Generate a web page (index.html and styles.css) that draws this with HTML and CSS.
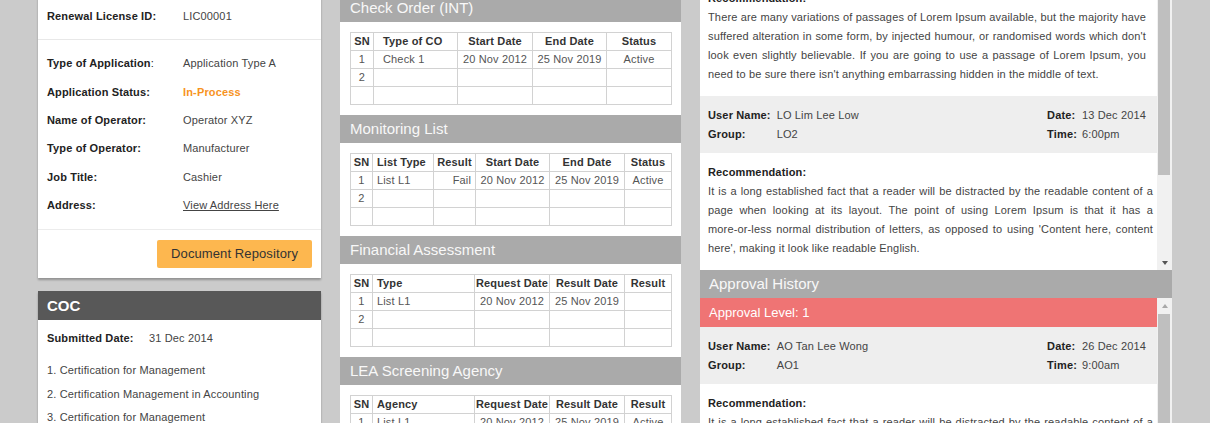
FILE: index.html
```html
<!DOCTYPE html>
<html lang="en">
<head>
<meta charset="utf-8">
<title>Renewal License</title>
<link rel="stylesheet" href="styles.css">
</head>
<body>
<div class="page">
  <div class="col-left">
    <div class="card">
      <div class="sec sec-top">
        <div class="kv kv-top"><span class="k">Renewal License ID:</span><span class="v">LIC00001</span></div>
      </div>
      <div class="sec sec-info">
        <div class="kv"><span class="k"><b>Type of Application</b>:</span><span class="v">Application Type A</span></div>
        <div class="kv"><span class="k"><b>Application Status:</b></span><span class="v status">In-Process</span></div>
        <div class="kv"><span class="k"><b>Name of Operator:</b></span><span class="v">Operator XYZ</span></div>
        <div class="kv"><span class="k"><b>Type of Operator:</b></span><span class="v">Manufacturer</span></div>
        <div class="kv"><span class="k"><b>Job Title:</b></span><span class="v">Cashier</span></div>
        <div class="kv"><span class="k"><b>Address:</b></span><span class="v"><a class="link" href="#">View Address Here</a></span></div>
      </div>
      <div class="sec sec-btn">
        <button class="btn" type="button">Document Repository</button>
      </div>
    </div>

    <div class="card coc">
      <div class="coc-head">COC</div>
      <div class="coc-body">
        <div class="coc-date"><span class="k">Submitted Date:</span><span class="v">31 Dec 2014</span></div>
        <ol class="coc-list">
          <li>1. Certification for Management</li>
          <li>2. Certification Management in Accounting</li>
          <li>3. Certification for Management</li>
        </ol>
      </div>
    </div>
  </div>

  <div class="col-mid">
    <div class="panel">
      <div class="panel-head">Check Order (INT)</div>
      <div class="panel-body">
        <table class="tbl">
          <colgroup><col class="w23"><col class="w84"><col class="w75"><col class="w74"><col class="w65"></colgroup>
          <tr><th>SN</th><th class="l9">Type of CO</th><th>Start Date</th><th>End Date</th><th>Status</th></tr>
          <tr><td>1</td><td class="l9">Check 1</td><td>20 Nov 2012</td><td>25 Nov 2019</td><td>Active</td></tr>
          <tr><td>2</td><td></td><td></td><td></td><td></td></tr>
          <tr><td></td><td></td><td></td><td></td><td></td></tr>
        </table>
      </div>
    </div>
    <div class="panel">
      <div class="panel-head">Monitoring List</div>
      <div class="panel-body">
        <table class="tbl">
          <colgroup><col class="w22"><col class="w61"><col class="w42"><col class="w74"><col class="w75"><col class="w47"></colgroup>
          <tr><th>SN</th><th class="l">List Type</th><th>Result</th><th>Start Date</th><th>End Date</th><th>Status</th></tr>
          <tr><td>1</td><td class="l">List L1</td><td class="r">Fail</td><td>20 Nov 2012</td><td>25 Nov 2019</td><td>Active</td></tr>
          <tr><td>2</td><td></td><td></td><td></td><td></td><td></td></tr>
          <tr><td></td><td></td><td></td><td></td><td></td><td></td></tr>
        </table>
      </div>
    </div>
    <div class="panel">
      <div class="panel-head">Financial Assessment</div>
      <div class="panel-body">
        <table class="tbl">
          <colgroup><col class="w22"><col class="w102"><col class="w75"><col class="w75"><col class="w47"></colgroup>
          <tr><th>SN</th><th class="l">Type</th><th>Request Date</th><th>Result Date</th><th>Result</th></tr>
          <tr><td>1</td><td class="l">List L1</td><td>20 Nov 2012</td><td>25 Nov 2019</td><td></td></tr>
          <tr><td>2</td><td></td><td></td><td></td><td></td></tr>
          <tr><td></td><td></td><td></td><td></td><td></td></tr>
        </table>
      </div>
    </div>
    <div class="panel">
      <div class="panel-head">LEA Screening Agency</div>
      <div class="panel-body">
        <table class="tbl">
          <colgroup><col class="w22"><col class="w102"><col class="w75"><col class="w75"><col class="w47"></colgroup>
          <tr><th>SN</th><th class="l">Agency</th><th>Request Date</th><th>Result Date</th><th>Result</th></tr>
          <tr><td>1</td><td class="l">List L1</td><td>20 Nov 2012</td><td>25 Nov 2019</td><td>Active</td></tr>
          <tr><td>2</td><td></td><td></td><td></td><td></td></tr>
          <tr><td></td><td></td><td></td><td></td><td></td></tr>
        </table>
      </div>
    </div>
  </div>

  <div class="col-right">
    <div class="scroll scroll-top">
      <div class="scroll-body">
        <div class="scroll-inner">
          <div class="rec rec-narrow">
            <div class="rec-label">Recommendation:</div>
            <p class="rec-text">There are many variations of passages of Lorem Ipsum available, but the majority have suffered alteration in some form, by injected humour, or randomised words which don't look even slightly believable. If you are going to use a passage of Lorem Ipsum, you need to be sure there isn't anything embarrassing hidden in the middle of text.</p>
          </div>
          <div class="meta">
            <div class="meta-left">
              <span class="k">User Name:</span><span class="v">LO Lim Lee Low</span>
              <span class="k">Group:</span><span class="v">LO2</span>
            </div>
            <div class="meta-right">
              <span class="k">Date:</span><span class="v">13 Dec 2014</span>
              <span class="k">Time:</span><span class="v">6:00pm</span>
            </div>
          </div>
          <div class="rec">
            <div class="rec-label">Recommendation:</div>
            <p class="rec-text">It is a long established fact that a reader will be distracted by the readable content of a page when looking at its layout. The point of using Lorem Ipsum is that it has a <span class="nowrap">more-or-less</span> normal distribution of letters, as opposed to using 'Content here, content here', making it look like readable English.</p>
          </div>
        </div>
      </div>
      <div class="sbar">
        <div class="thumb thumb-top"></div>
        <div class="sbar-fill"></div>
        <div class="arrow-box"><span class="arrow arrow-down"></span></div>
      </div>
    </div>

    <div class="rhead">Approval History</div>

    <div class="scroll scroll-bottom">
      <div class="scroll-body">
        <div class="level">Approval Level: 1</div>
        <div class="meta">
          <div class="meta-left">
            <span class="k">User Name:</span><span class="v">AO Tan Lee Wong</span>
            <span class="k">Group:</span><span class="v">AO1</span>
          </div>
          <div class="meta-right">
            <span class="k">Date:</span><span class="v">26 Dec 2014</span>
            <span class="k">Time:</span><span class="v">9:00am</span>
          </div>
        </div>
        <div class="rec">
          <div class="rec-label">Recommendation:</div>
          <p class="rec-text">It is a long established fact that a reader will be distracted by the readable content of a page when looking at its layout. The point of using Lorem Ipsum is that it has a <span class="nowrap">more-or-less</span> normal distribution of letters, as opposed to using 'Content here, content here', making it look like readable English.</p>
        </div>
      </div>
      <div class="sbar">
        <div class="arrow-box"><span class="arrow arrow-up"></span></div>
        <div class="thumb thumb-bottom"></div>
      </div>
    </div>
  </div>
</div>
</body>
</html>
```

FILE: styles.css
```css
html, body {
  margin: 0;
  padding: 0;
  height: 100%;
  overflow: hidden;
}
body {
  background: #cbcbcb;
  font-family: "Liberation Sans", Arial, sans-serif;
  font-size: 11px;
  letter-spacing: 0.15px;
  color: #444;
}
.page {
  display: flex;
  align-items: flex-start;
  gap: 19px;
  padding: 0 38px;
  margin-top: -6px;
}

/* ---------- left column ---------- */
.col-left {
  width: 283px;
  flex: none;
}
.card {
  background: #fff;
  box-shadow: 0 2px 2px rgba(0, 0, 0, 0.28);
}
.sec {
  padding: 0 9px;
}
.sec-top {
  padding-top: 8px;
  padding-bottom: 9px;
  border-bottom: 1px solid #e8e8e8;
}
.sec-info {
  padding-top: 9px;
  padding-bottom: 10px;
  border-bottom: 1px solid #ececec;
}
.kv {
  display: grid;
  grid-template-columns: 136px 1fr;
  align-items: center;
  height: 28.4px;
}
.kv-top {
  height: 28px;
}
.k {
  color: #222;
  font-weight: bold;
}
.kv .k {
  font-weight: normal;
}
.kv-top .k {
  font-weight: bold;
}
.k b {
  font-weight: bold;
}
.v {
  color: #444;
}
.status {
  color: #f7931e;
  font-weight: bold;
}
.link {
  color: #444;
  text-decoration: underline;
}
.sec-btn {
  display: flex;
  justify-content: flex-end;
  padding-top: 10px;
  padding-bottom: 10px;
}
.btn {
  height: 28px;
  padding: 0 14px;
  border: 0;
  border-radius: 2px;
  background: #fdb74f;
  color: #333;
  font-family: "Liberation Sans", Arial, sans-serif;
  font-size: 13px;
  letter-spacing: 0.1px;
  line-height: 28px;
}
.coc {
  margin-top: 13px;
}
.coc-head {
  height: 29px;
  line-height: 29px;
  padding-left: 9px;
  background: #585858;
  color: #fff;
  font-size: 15px;
  font-weight: bold;
  letter-spacing: 0;
}
.coc-body {
  padding: 9px 9px 20px;
}
.coc-date {
  display: grid;
  grid-template-columns: 102px 1fr;
  line-height: 19px;
}
.coc-list {
  list-style: none;
  margin: 11px 0 0;
  padding: 0;
  line-height: 23.5px;
  color: #444;
}

/* ---------- middle column ---------- */
.col-mid {
  width: 341px;
  flex: none;
}
.panel-head {
  height: 28px;
  line-height: 28px;
  padding-left: 10px;
  background: #aaaaaa;
  color: #f8f8f8;
  font-size: 15px;
  letter-spacing: 0;
}
.panel-body {
  background: #fff;
  padding: 10px 10px 10px;
}
.tbl {
  width: 100%;
  border-collapse: collapse;
  table-layout: fixed;
  font-size: 11px;
  color: #555;
}
.tbl th,
.tbl td {
  border: 1px solid #d2d2d2;
  height: 17px;
  padding: 0 1px;
  line-height: 17px;
  text-align: center;
  white-space: nowrap;
  font-weight: normal;
}
.tbl th {
  font-weight: bold;
  color: #333;
}
.tbl .l {
  text-align: left;
  padding-left: 4px;
}
.tbl .l9 {
  text-align: left;
  padding-left: 9px;
}
.tbl .r {
  text-align: right;
  padding-right: 4px;
}
.w22 { width: 22px; }
.w23 { width: 23px; }
.w42 { width: 42px; }
.w47 { width: 47px; }
.w61 { width: 61px; }
.w65 { width: 65px; }
.w74 { width: 74px; }
.w75 { width: 75px; }
.w84 { width: 84px; }
.w102 { width: 102px; }

/* ---------- right column ---------- */
.col-right {
  width: 472px;
  flex: none;
}
.scroll {
  display: flex;
  background: #fff;
}
.scroll-top {
  height: 276px;
}
.scroll-bottom {
  height: 140px;
}
.scroll-body {
  flex: 1;
  overflow: hidden;
}
.scroll-inner {
  margin-top: -15px;
}
.rec {
  background: #fff;
  padding: 10px 4px 12px 8px;
}
.rec-narrow {
  padding-right: 11px;
}
.rec-label {
  color: #222;
  font-weight: bold;
  line-height: 19px;
}
.rec-text {
  margin: 0;
  line-height: 19px;
  text-align: justify;
  color: #444;
}
.nowrap {
  white-space: nowrap;
}
.meta {
  display: flex;
  justify-content: space-between;
  align-items: flex-start;
  background: #eeeeee;
  padding: 10px 11px 9px 8px;
  line-height: 19px;
}
.meta-left {
  display: grid;
  grid-template-columns: auto auto;
  column-gap: 6px;
}
.meta-right {
  display: grid;
  grid-template-columns: auto auto;
  column-gap: 5px;
}
.rhead {
  height: 28px;
  line-height: 28px;
  padding-left: 9px;
  background: #aaaaaa;
  color: #f8f8f8;
  font-size: 15px;
  letter-spacing: 0;
}
.level {
  height: 29px;
  line-height: 29px;
  padding-left: 9px;
  background: #ef7474;
  color: #fff;
  font-size: 13px;
  letter-spacing: 0;
}
.sbar {
  width: 15px;
  flex: none;
  display: flex;
  flex-direction: column;
  background: #f1f1f1;
}
.thumb {
  margin: 0 2px 0 1px;
  background: #bfbfbf;
}
.thumb-top {
  height: 181px;
}
.thumb-bottom {
  flex: 1;
  margin-top: 1px;
}
.sbar-fill {
  flex: 1;
}
.arrow-box {
  height: 15px;
  display: flex;
  align-items: center;
  justify-content: center;
}
.arrow {
  width: 0;
  height: 0;
  border-left: 3.5px solid transparent;
  border-right: 3.5px solid transparent;
}
.arrow-down {
  border-top: 4px solid #555;
}
.arrow-up {
  border-bottom: 4px solid #a8a8a8;
}
```
